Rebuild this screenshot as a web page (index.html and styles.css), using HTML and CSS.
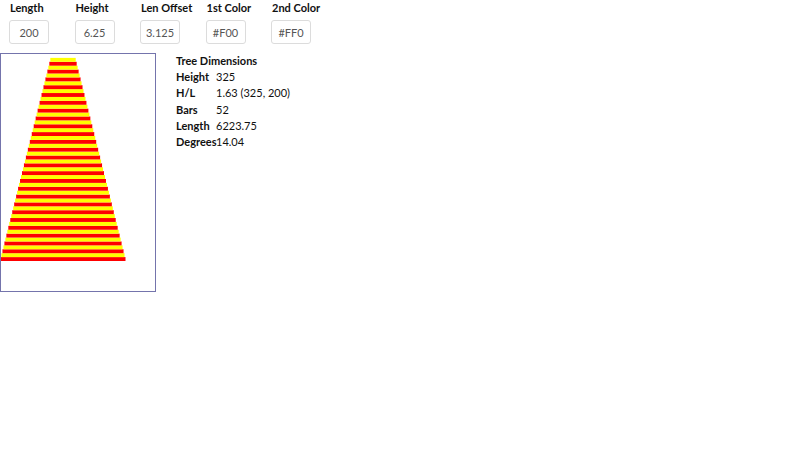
FILE: index.html
```html
<!DOCTYPE html>
<html>
<head>
<meta charset="utf-8">
<link rel="stylesheet" href="styles.css">
</head>
<body>
<div class="controls">
  <div class="field"><label>Length</label><input class="inp" value="200"></div>
  <div class="field"><label>Height</label><input class="inp" value="6.25"></div>
  <div class="field"><label>Len Offset</label><input class="inp" value="3.125"></div>
  <div class="field"><label>1st Color</label><input class="inp" value="#F00"></div>
  <div class="field"><label>2nd Color</label><input class="inp" value="#FF0"></div>
</div>
<div class="main">
  <div class="canvas">
    <svg id="tree" width="154" height="237" viewBox="0 0 154 237"></svg>
  </div>
  <div class="dims">
    <div class="title">Tree Dimensions</div>
    <div class="row"><span class="k">Height</span><span>325</span></div>
    <div class="row"><span class="k">H/L</span><span>1.63 (325, 200)</span></div>
    <div class="row"><span class="k">Bars</span><span>52</span></div>
    <div class="row"><span class="k">Length</span><span>6223.75</span></div>
    <div class="row"><span class="k">Degrees</span><span>14.04</span></div>
  </div>
</div>
<script src="script.js"></script>
</body>
</html>
```
FILE: styles.css
```css
body {
  margin: 0;
  font-family: Lato, "Open Sans", sans-serif;
  color: #111;
  background: #fff;
}
.controls {
  display: flex;
  padding: 1px 0 0 9px;
}
.field {
  width: 65.5px;
  display: flex;
  flex-direction: column;
}
.field label {
  font-weight: 700;
  font-size: 11px;
  line-height: 14px;
  padding-left: 1px;
  height: 19px;
}
.inp {
  box-sizing: border-box;
  width: 40px;
  height: 24px;
  border: 1px solid #dcdcdc;
  border-radius: 3px;
  font-family: inherit;
  font-size: 11px;
  color: #555;
  text-align: center;
  padding: 0;
  outline: none;
}
.main {
  display: flex;
  margin-top: 9px;
}
.canvas {
  width: 154px;
  height: 237px;
  border: 1px solid #7474ac;
}
.canvas svg { display: block; }
.dims {
  margin-left: 19px;
  padding-top: 1px;
  font-size: 11px;
}
.title {
  font-weight: 700;
  line-height: 14px;
  margin-left: 1px;
  margin-bottom: 1px;
}
.row {
  display: flex;
  line-height: 16.25px;
  margin-left: 1px;
}
.k {
  font-weight: 700;
  width: 40px;
}
```
FILE: script.js
```js
(function () {
  var svg = document.getElementById('tree');
  var ns = 'http://www.w3.org/2000/svg';
  var s = 0.625, L = 200, H = 6.25, off = 3.125, n = 52;
  var cx = 62, bottom = 207;
  for (var i = 0; i < n; i++) {
    var len = (L - i * off) * s;
    var r = document.createElementNS(ns, 'rect');
    r.setAttribute('x', cx - len / 2);
    r.setAttribute('y', bottom - (i + 1) * H * s);
    r.setAttribute('width', len);
    r.setAttribute('height', H * s);
    r.setAttribute('fill', i % 2 === 0 ? '#f00' : '#ff0');
    svg.appendChild(r);
  }
})();
```
